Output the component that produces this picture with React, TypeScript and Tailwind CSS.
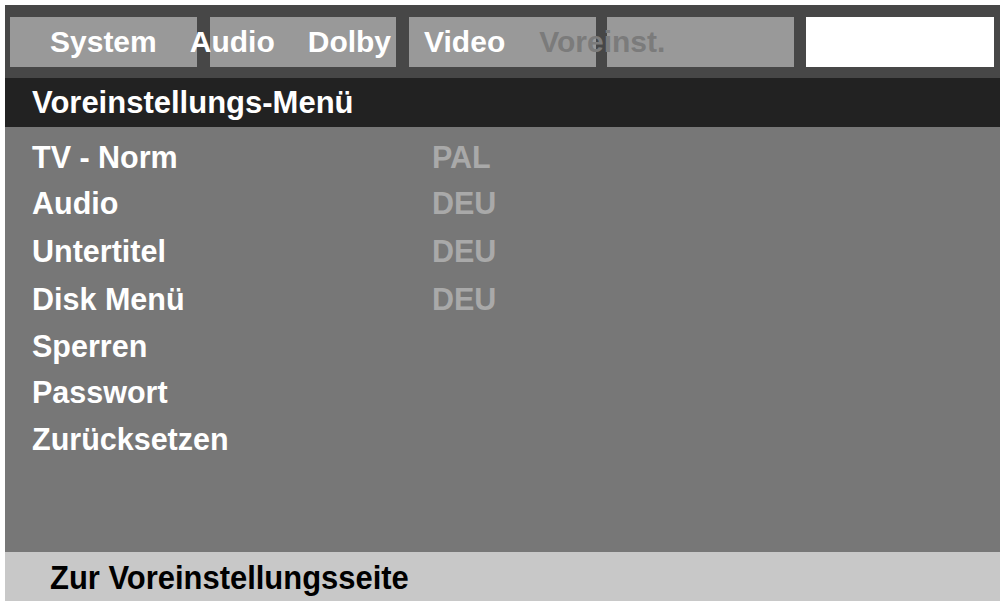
import React from "react";

const font = { fontFamily: '"Liberation Sans", Arial, sans-serif' };

const rows: { label: string; value?: string; h: string }[] = [
  { label: "TV - Norm", value: "PAL", h: "h-[45px]" },
  { label: "Audio", value: "DEU", h: "h-[47px]" },
  { label: "Untertitel", value: "DEU", h: "h-[48px]" },
  { label: "Disk Menü", value: "DEU", h: "h-[49px]" },
  { label: "Sperren", h: "h-[44px]" },
  { label: "Passwort", h: "h-[48px]" },
  { label: "Zurücksetzen", h: "h-[46px]" },
];

export default function App() {
  return (
    <div className="w-[1006px] h-[606px] bg-white" style={font}>
      <div className="ml-[5px] pt-[5px] w-[995px]">
        <div className="w-[995px] h-[596px] flex flex-col">
          {/* Top tab bar */}
          <div className="relative h-[73px] bg-[#474747] pt-[12px] pl-[5px]">
            <div className="flex h-[50px]">
              <div className="w-[187px] h-[50px] bg-[#999999]" />
              <div className="ml-[13px] w-[186px] h-[50px] bg-[#999999]" />
              <div className="ml-[13px] w-[187px] h-[50px] bg-[#999999]" />
              <div className="ml-[11px] w-[187px] h-[50px] bg-[#999999]" />
              <div className="ml-[12px] w-[188px] h-[50px] bg-white" />
            </div>
            <div className="absolute left-0 top-[12px] h-[50px] flex items-center pl-[45px] gap-[33px] text-[30px] font-bold leading-none">
              <span className="text-white">System</span>
              <span className="text-white">Audio</span>
              <span className="text-white">Dolby</span>
              <span className="text-white">Video</span>
              <span className="text-[#7b7b7b] ml-[1px]">Voreinst.</span>
            </div>
          </div>
          {/* Header */}
          <div className="h-[49px] bg-[#222222] flex items-center pl-[27px]">
            <span className="text-white text-[31px] font-bold leading-none">Voreinstellungs-Menü</span>
          </div>
          {/* Content */}
          <div className="h-[425px] bg-[#777777] pt-[8px] pl-[27px]">
            {rows.map((r) => (
              <div key={r.label} className={`${r.h} flex items-center text-[30.5px] font-bold leading-none`}>
                <span className="w-[400px] text-white">{r.label}</span>
                {r.value && <span className="text-[#a9a9a9]">{r.value}</span>}
              </div>
            ))}
          </div>
          {/* Footer */}
          <div className="h-[49px] bg-[#c8c8c8] flex items-center pl-[45px]">
            <span className="inline-block origin-left scale-x-[0.91] text-black text-[34px] font-bold leading-none">Zur Voreinstellungsseite</span>
          </div>
        </div>
      </div>
    </div>
  );
}
